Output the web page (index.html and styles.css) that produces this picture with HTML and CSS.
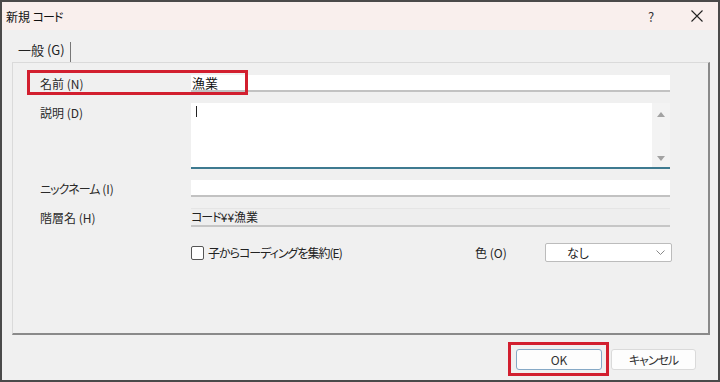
FILE: index.html
```html
<!DOCTYPE html>
<html lang="ja">
<head>
    <meta charset="UTF-8">
    <meta name="viewport" content="width=device-width, initial-scale=1.0">
    <title>新規 コード</title>
    <link rel="stylesheet" href="styles.css">
</head>
<body>
    <div class="dialog">
        <div class="titlebar">
            <span class="title">新規 <span class="kana">コード</span></span>
            <span class="help">?</span>
            <span class="close">
                <svg width="12" height="12" viewBox="0 0 12 12">
                    <path d="M0.5 0.5 L11.5 11.5 M11.5 0.5 L0.5 11.5" stroke="#222" stroke-width="1.1" fill="none"/>
                </svg>
            </span>
        </div>

        <div class="tabs">
            <span class="tab">一般 (G)</span>
        </div>

        <div class="panel">
            <div class="mark-name"></div>

            <div class="row row-name">
                <label class="label">名前 (N)</label>
                <div class="field">漁業</div>
            </div>

            <div class="row row-desc">
                <label class="label">説明 (D)</label>
                <div class="memo">
                    <span class="caret"></span>
                    <div class="scroll">
                        <span class="arrow-up"></span>
                        <span class="arrow-down"></span>
                    </div>
                </div>
            </div>

            <div class="row row-nick">
                <label class="label"><span class="kana">ニックネーム</span> (I)</label>
                <div class="field"></div>
            </div>

            <div class="row row-path">
                <label class="label">階層名 (H)</label>
                <div class="field readonly"><span class="kana">コード</span>¥¥漁業</div>
            </div>

            <div class="row row-options">
                <span class="label"></span>
                <div class="options">
                    <span class="checkbox"></span>
                    <span class="check-text">子からコーディングを集約(E)</span>
                    <span class="color-label">色 (O)</span>
                    <div class="select">
                        <span>なし</span>
                        <svg width="9" height="6" viewBox="0 0 9 6">
                            <path d="M0.5 0.5 L4.5 4.5 L8.5 0.5" stroke="#888" stroke-width="1" fill="none"/>
                        </svg>
                    </div>
                </div>
            </div>
        </div>

        <div class="buttons">
            <span class="ok-wrap">
                <button class="btn btn-ok">OK</button>
            </span>
            <button class="btn"><span class="kana">キャンセル</span></button>
        </div>
    </div>
</body>
</html>
```

FILE: styles.css
```css
* {
    margin: 0;
    padding: 0;
    box-sizing: border-box;
}

body {
    font-family: "Noto Sans CJK JP", "Noto Sans", sans-serif;
    font-size: 12px;
    font-feature-settings: "palt";
    color: #222;
    background: #f0f0f0;
}

.kana {
    letter-spacing: -1px;
}

.dialog {
    width: 720px;
    height: 382px;
    border: 2px solid #4a4a4a;
    background: #f0f0f0;
    display: flex;
    flex-direction: column;
}

.titlebar {
    height: 28px;
    background: #f9efed;
    display: flex;
    align-items: center;
    padding-left: 4px;
}

.title {
    flex: 1;
    font-size: 12px;
    color: #111;
}

.help {
    font-size: 13px;
    color: #333;
    width: 12px;
    margin-right: 31px;
}

.close {
    display: flex;
    margin-right: 15px;
}

.tabs {
    height: 32px;
    display: flex;
    align-items: flex-end;
    padding-left: 16px;
}

.tab {
    height: 20px;
    padding-right: 5px;
    border-right: 1px solid #777;
    font-size: 13px;
    line-height: 15px;
    color: #222;
}

.panel {
    position: relative;
    height: 273px;
    margin: 0 8px 0 10px;
    border-top: 1px solid #dadada;
    border-left: 1px solid #dadada;
    border-right: 2px solid #8a8a8a;
    border-bottom: 2px solid #8a8a8a;
    padding: 12px 38px 0 27px;
}

.mark-name {
    position: absolute;
    left: 14px;
    top: 7px;
    width: 221px;
    height: 25px;
    border: 3px solid #d21f2f;
}

.row {
    display: flex;
    align-items: center;
}

.label {
    width: 151px;
    flex-shrink: 0;
    color: #2a2a2a;
}

.field {
    flex: 1;
    height: 17px;
    background: #fff;
    border-bottom: 2px solid #c2c2c2;
    font-size: 13px;
    line-height: 15px;
    padding-left: 1px;
    color: #111;
}

.row-desc {
    margin-top: 11px;
    align-items: flex-start;
}

.row-desc .label {
    padding-top: 1px;
}

.memo {
    flex: 1;
    height: 66px;
    background: #fff;
    border-bottom: 2px solid #3e7a90;
    display: flex;
    justify-content: space-between;
}

.caret {
    width: 1px;
    height: 11px;
    background: #222;
    margin: 3px 0 0 5px;
}

.scroll {
    width: 18px;
    background: #f3f3f3;
    display: flex;
    flex-direction: column;
    justify-content: space-between;
    align-items: center;
    padding: 9px 0 6px;
}

.arrow-up,
.arrow-down {
    width: 0;
    height: 0;
    border-left: 4px solid transparent;
    border-right: 4px solid transparent;
}

.arrow-up {
    border-bottom: 5px solid #a3a3a3;
}

.arrow-down {
    border-top: 5px solid #a3a3a3;
}

.row-nick {
    margin-top: 11px;
}

.row-path {
    margin-top: 11px;
}

.field.readonly {
    height: 19px;
    background: #eeeeee;
    border-top: 1px solid #e5e5e5;
    border-bottom: 2px solid #c6c6c6;
    font-size: 12px;
    line-height: 16px;
    padding-left: 0;
    color: #222;
}

.row-options {
    margin-top: 16px;
}

.options {
    flex: 1;
    display: flex;
    align-items: center;
    height: 19px;
}

.checkbox {
    width: 13px;
    height: 14px;
    border: 1px solid #555;
    border-radius: 2px;
    background: #fff;
    margin-right: 4px;
}

.check-text {
    flex: 1;
    letter-spacing: -1px;
}

.color-label {
    width: 70px;
}

.select {
    width: 127px;
    height: 19px;
    margin-right: -2px;
    background: #fff;
    border: 1px solid #bcbcbc;
    border-radius: 2px;
    display: flex;
    align-items: center;
    justify-content: space-between;
    padding: 0 6px 0 21px;
}

.buttons {
    flex: 1;
    display: flex;
    justify-content: flex-end;
    align-items: flex-start;
    padding: 14px 22px 0 0;
    gap: 9px;
}

.ok-wrap {
    position: relative;
    display: flex;
}

.ok-wrap::after {
    content: "";
    position: absolute;
    left: -8px;
    top: -7px;
    right: -7px;
    bottom: -6px;
    border: 3px solid #d21f2f;
}

.btn {
    width: 85px;
    height: 21px;
    font-family: inherit;
    font-size: 12px;
    font-feature-settings: "palt";
    color: #333;
    background: #fdfdfd;
    border: 1px solid #dadada;
    border-radius: 3px;
}

.btn-ok {
    width: 86px;
    border-color: #86a9c6;
}
```
